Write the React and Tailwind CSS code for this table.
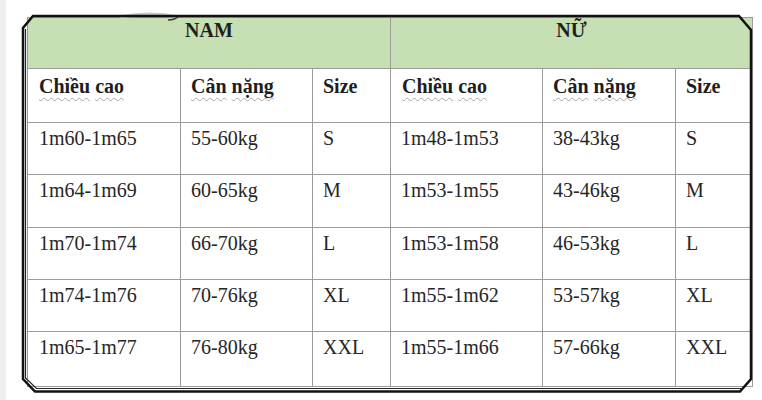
const widths = ["w-[153px]", "w-[132px]", "w-[78px]", "w-[152px]", "w-[133px]", "w-[76px]"];

const rows = [
    ["1m60-1m65", "55-60kg", "S", "1m48-1m53", "38-43kg", "S"],
    ["1m64-1m69", "60-65kg", "M", "1m53-1m55", "43-46kg", "M"],
    ["1m70-1m74", "66-70kg", "L", "1m53-1m58", "46-53kg", "L"],
    ["1m74-1m76", "70-76kg", "XL", "1m55-1m62", "53-57kg", "XL"],
    ["1m65-1m77", "76-80kg", "XXL", "1m55-1m66", "57-66kg", "XXL"],
];
const rowHeights = ["h-[52px]", "h-[53px]", "h-[52px]", "h-[52px]", "h-[54px]"];

const Squiggle = ({ children }) => (
    <span className="underline decoration-wavy decoration-[#a8a8a8] decoration-1 underline-offset-[4px]">
        {children}
    </span>
);

const HeadLabel = ({ words }) => (
    <span className="flex gap-[5px]">
        {words.map((w) => (
            <Squiggle key={w}>{w}</Squiggle>
        ))}
    </span>
);

const Frame = () => (
    <svg className="absolute inset-0 pointer-events-none" width="762" height="400" viewBox="0 0 762 400">
        <path d="M120,17 C140,13 160,13 178,17" fill="none" stroke="#c8c8c8" strokeWidth="3" />
        <path d="M168,20 C172,20 176,19 179,16" fill="none" stroke="#333" strokeWidth="1.5" />
        <path
            d="M33,16 L739,16 L751,30 L751,379 L740,391.5 L35,391.5 L23,379 L23,28 Z"
            fill="none"
            stroke="#111"
            strokeWidth="2.5"
        />
        <path d="M25.5,29 L25.5,378 L36.5,388.5 L741,388.5" fill="none" stroke="#222" strokeWidth="1.2" />
    </svg>
);

const App = () => {
    const headStyle = "text-[20px] font-bold text-[#1e1e1e] leading-[23px]";
    return (
        <div className="relative w-[762px] h-[400px] bg-white flex font-['Liberation_Serif','Times_New_Roman',serif]">
            <div className="w-[6px] h-full bg-[#efefef]"></div>
            <div className="ml-[21px] mt-[17px] w-[726px] self-start border border-[#9c9c9c]">
                <div className="flex h-[51px] bg-[#c6e0b4] border-b border-[#9c9c9c]">
                    <div className={`w-[363px] border-r border-[#9c9c9c] flex justify-center pt-[1px] ${headStyle}`}>
                        NAM
                    </div>
                    <div className={`w-[361px] flex justify-center pt-[1px] ${headStyle}`}>NỮ</div>
                </div>
                <div className="flex h-[54px] border-b border-[#9c9c9c]">
                    {[0, 1].map((g) => (
                        <div key={g} className="flex">
                            <div className={`${widths[g * 3]} border-r border-[#9c9c9c] pl-[11px] pt-[6px] ${headStyle}`}>
                                <HeadLabel words={["Chiều", "cao"]} />
                            </div>
                            <div className={`${widths[g * 3 + 1]} border-r border-[#9c9c9c] pl-[10px] pt-[6px] ${headStyle}`}>
                                <HeadLabel words={["Cân", "nặng"]} />
                            </div>
                            <div
                                className={`${widths[g * 3 + 2]} ${g === 0 ? "border-r border-[#9c9c9c]" : ""} pl-[10px] pt-[6px] ${headStyle}`}
                            >
                                Size
                            </div>
                        </div>
                    ))}
                </div>
                {rows.map((row, i) => (
                    <div
                        key={i}
                        className={`flex ${rowHeights[i]} ${i < rows.length - 1 ? "border-b border-[#9c9c9c]" : ""}`}
                    >
                        {row.map((cell, j) => (
                            <div
                                key={j}
                                className={`${widths[j]} ${j < 5 ? "border-r border-[#9c9c9c]" : ""} ${
                                    j === 0 ? "pl-[11px]" : "pl-[10px]"
                                } pt-[4px] text-[20px] leading-[23px] text-[#262626]`}
                            >
                                {cell}
                            </div>
                        ))}
                    </div>
                ))}
            </div>
            <Frame />
        </div>
    );
};

export default App;
